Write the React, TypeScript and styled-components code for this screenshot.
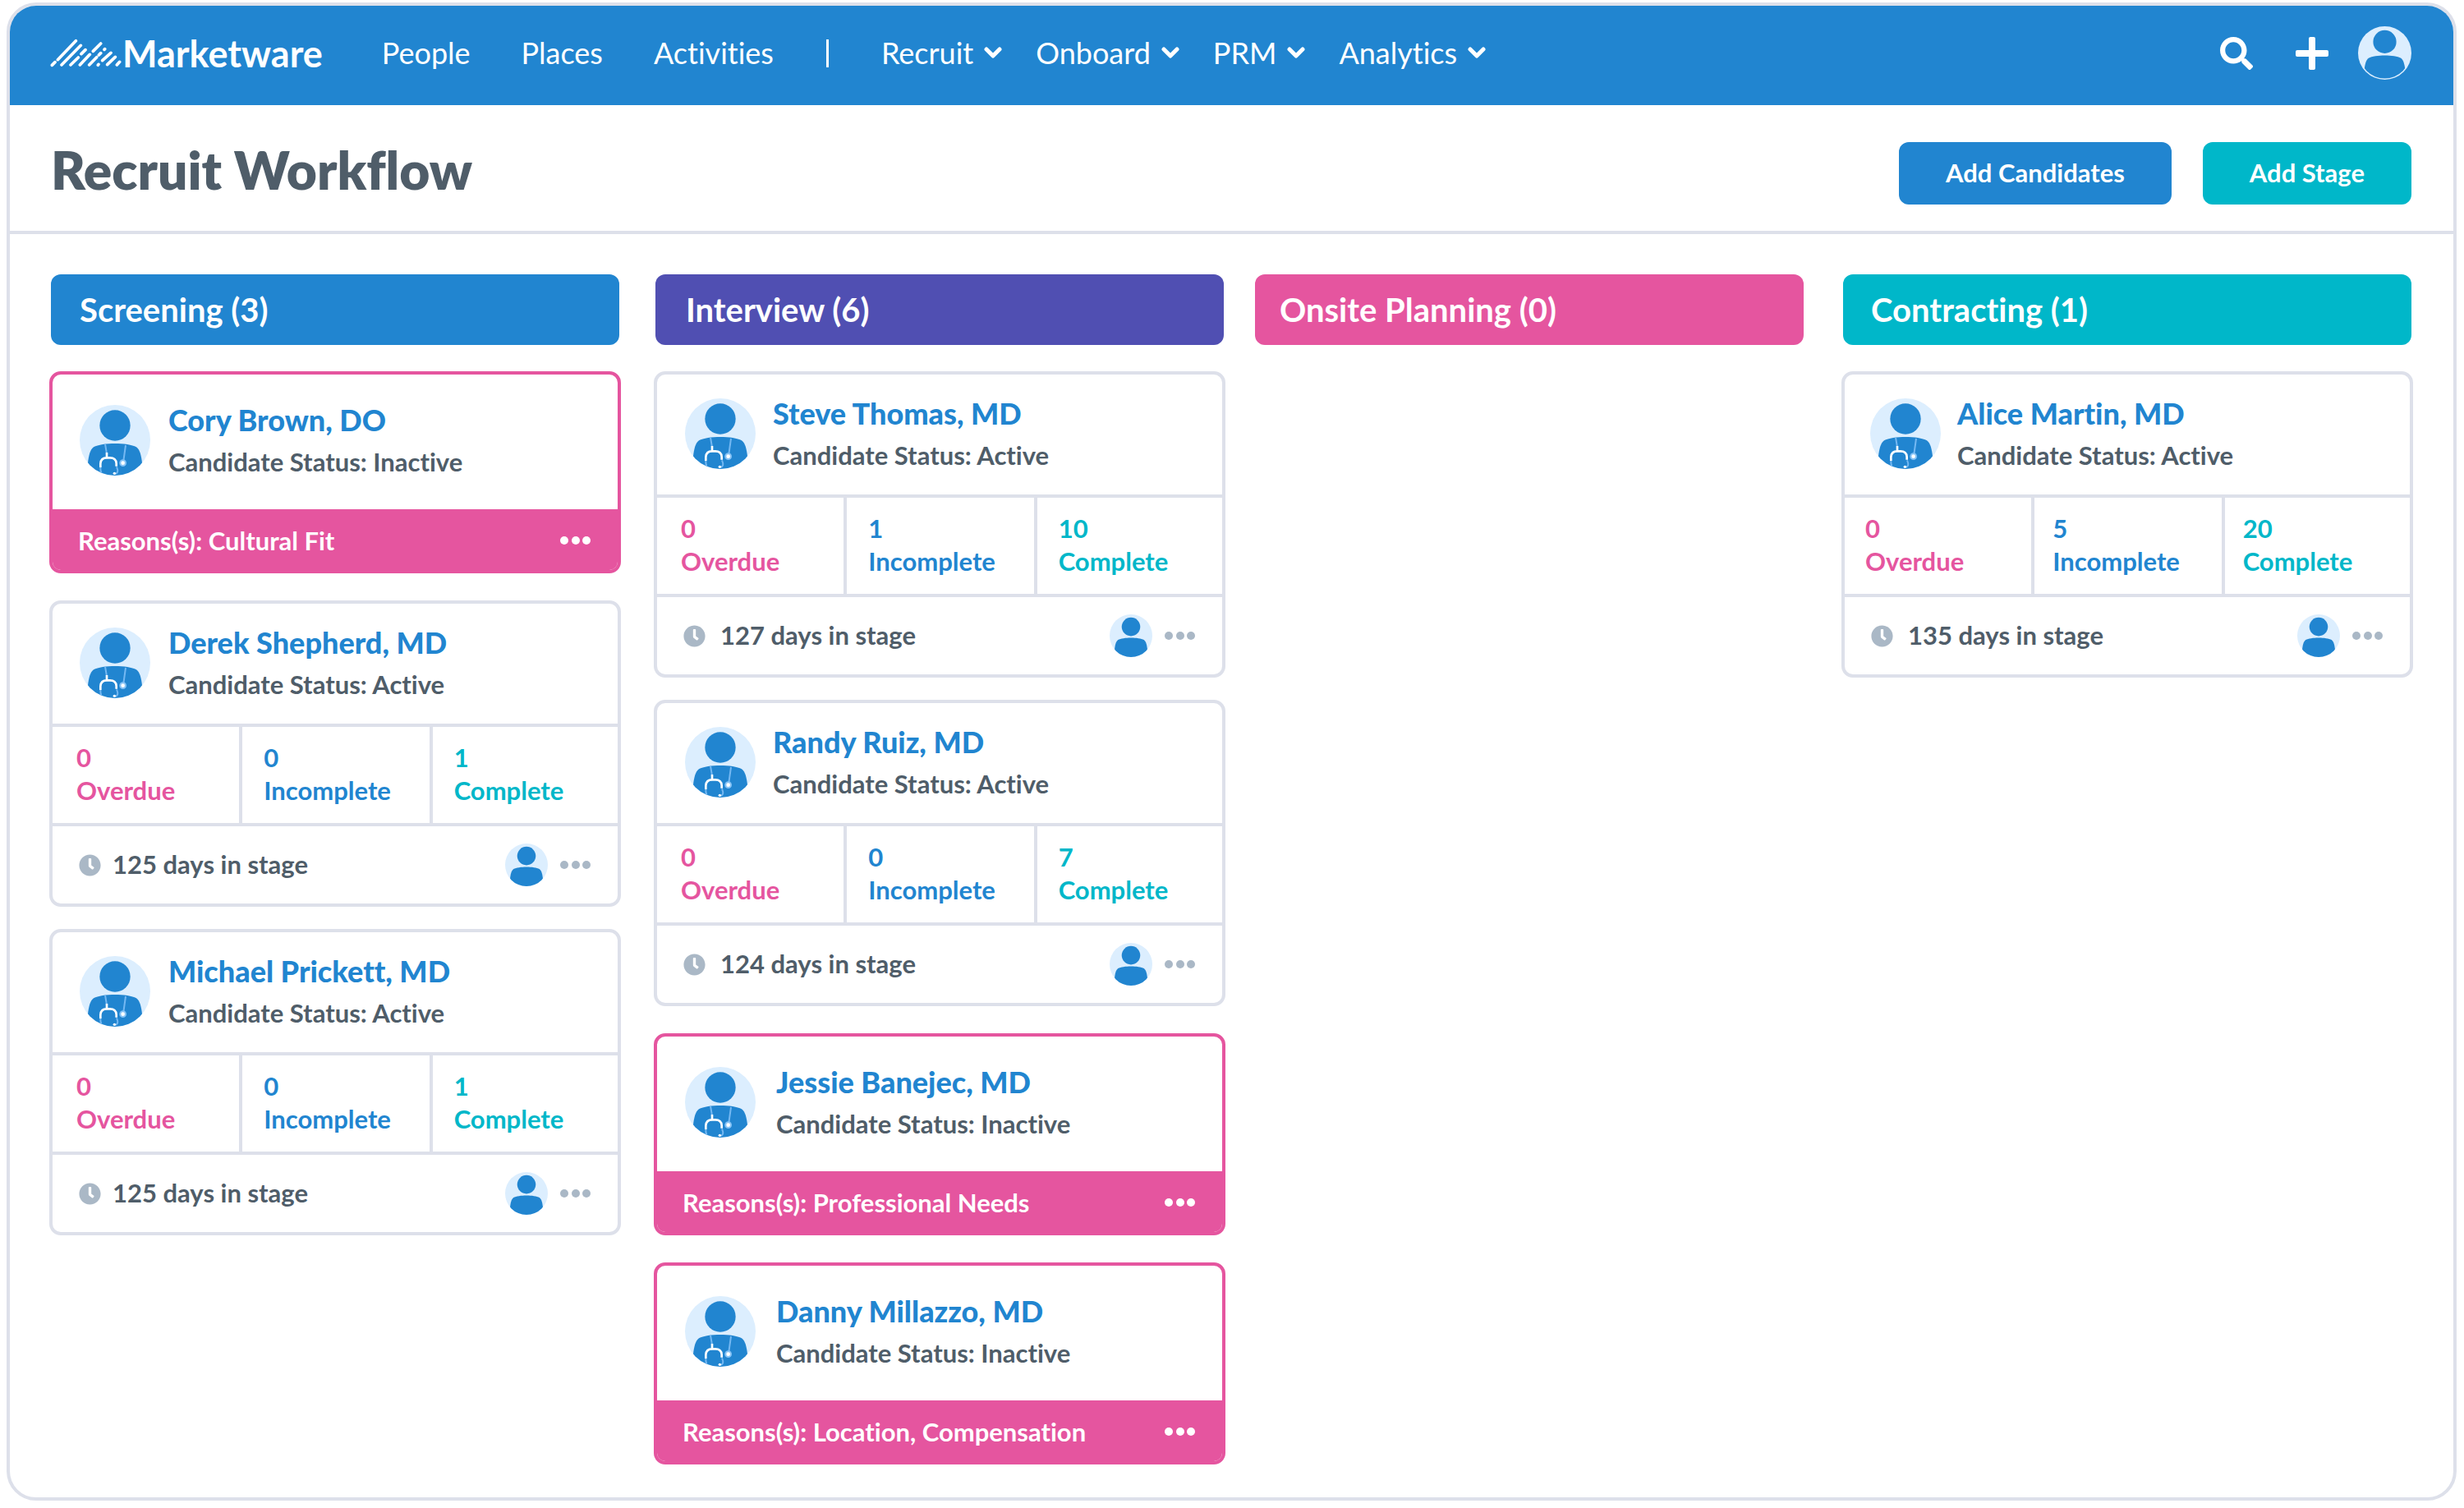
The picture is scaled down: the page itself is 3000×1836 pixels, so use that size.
import React from "react";
import styled, { createGlobalStyle } from "styled-components";
import { FaClock, FaSearch } from "react-icons/fa";

const color = {
  blue: "#2185d0",
  teal: "#00b7c9",
  pink: "#e5559f",
  purple: "#504fb2",
  slate: "#4f5d69",
  line: "#dde0ea",
  pale: "#dceefe",
  mute: "#aab8c6",
};

const GlobalStyle = createGlobalStyle`
  *, *::before, *::after { box-sizing: border-box; }
  body {
    margin: 0;
    background: #fff;
    color: ${color.slate};
    font-family: Lato, "Liberation Sans", sans-serif;
    font-variant-ligatures: none;
  }
  h1, h2, h3, p, dl, dt, dd { margin: 0; }
  button { font: inherit; color: inherit; border: 0; background: none; padding: 0; cursor: pointer; }
  a { color: inherit; text-decoration: none; }
  svg { display: block; flex: none; }
`;

const Page = styled.div`
  display: flex;
  min-height: 100vh;
  padding: 3px 9px 9px 8px;
`;

const Frame = styled.div`
  flex: 1;
  min-width: 0;
  border: 4px solid ${color.line};
  border-radius: 36px;
  overflow: hidden;
`;

const NavBar = styled.header`
  display: flex;
  align-items: center;
  justify-content: space-between;
  height: 121px;
  padding: 0 51px 6px 49px;
  background: ${color.blue};
  color: #fff;
`;

const NavGroup = styled.div<{ $gap?: number }>`
  display: flex;
  align-items: center;
  gap: ${(p) => p.$gap ?? 0}px;
`;

const Brand = styled.a`
  display: flex;
  align-items: center;
  margin-right: 72px;
  font-size: 45px;
  font-weight: 700;
  line-height: 52px;
`;

const NavLinks = styled.nav<{ $gap: number }>`
  display: flex;
  align-items: center;
  gap: ${(p) => p.$gap}px;
  padding-bottom: 2px;
  font-size: 36px;
  line-height: 44px;
`;

const NavDivider = styled.span`
  width: 3px;
  height: 34px;
  margin: 0 64px;
  background: #fff;
`;

const NavMenu = styled.button`
  display: flex;
  align-items: center;
  gap: 13px;
`;

const IconButton = styled.button`
  display: flex;
  align-items: center;
  justify-content: center;
`;

const TitleBar = styled.section`
  display: flex;
  align-items: flex-start;
  justify-content: space-between;
  padding: 45px 51px 32px 50px;
  border-bottom: 4px solid ${color.line};
`;

const Title = styled.h1`
  font-size: 64px;
  font-weight: 800;
  line-height: 68px;
`;

const TitleActions = styled.div`
  display: flex;
  gap: 38px;
`;

const ActionButton = styled.button<{ $color: string }>`
  height: 76px;
  padding: 0 57px 2px;
  border-radius: 12px;
  background: ${(p) => p.$color};
  color: #fff;
  font-size: 31px;
  font-weight: 700;
`;

const Board = styled.main`
  display: flex;
  align-items: flex-start;
  padding: 49px 49px 38px 48px;
`;

const StageColumn = styled.section<{ $share: number; $after: number }>`
  flex: ${(p) => p.$share} 1 0;
  min-width: 0;
  margin-right: ${(p) => p.$after}px;
`;

const StageTitle = styled.h2<{ $color: string; $inset: number }>`
  margin: 0 2px 32px;
  padding: 0 ${(p) => p.$inset}px;
  border-radius: 12px;
  background: ${(p) => p.$color};
  color: #fff;
  font-size: 40px;
  font-weight: 700;
  line-height: 86px;
`;

const Card = styled.article<{ $inactive: boolean; $above: number }>`
  margin-top: ${(p) => p.$above}px;
  border: 4px solid ${(p) => (p.$inactive ? color.pink : color.line)};
  border-radius: 14px;
  overflow: hidden;
`;

const CardHead = styled.div<{ $inactive: boolean; $inset: number; $gap: number }>`
  display: flex;
  align-items: center;
  gap: ${(p) => p.$gap}px;
  padding: ${(p) => (p.$inactive ? "33px" : "25px")} ${(p) => p.$inset}px
    ${(p) => (p.$inactive ? "38px" : "28px")};
`;

const Name = styled.h3`
  color: ${color.blue};
  font-size: 36px;
  font-weight: 900;
  line-height: 44px;
`;

const Status = styled.p`
  margin-top: 9px;
  font-size: 31px;
  font-weight: 700;
  line-height: 40px;
`;

const Stats = styled.dl`
  display: grid;
  grid-template-columns: 227fr 231fr 229fr;
  border-top: 4px solid ${color.line};
  border-bottom: 4px solid ${color.line};
  font-size: 31px;
  font-weight: 700;
  line-height: 40px;
`;

const Stat = styled.div<{ $color: string; $inset: number; $first: boolean }>`
  display: flex;
  flex-direction: column-reverse;
  padding: 17px 0 20px ${(p) => p.$inset}px;
  border-left: ${(p) => (p.$first ? 0 : 4)}px solid ${color.line};
  color: ${(p) => p.$color};
`;

const CardFoot = styled.div`
  display: flex;
  align-items: center;
  justify-content: space-between;
  height: 94px;
  padding: 0 33px 0 32px;
  font-size: 31px;
  font-weight: 700;
  line-height: 40px;
`;

const FootGroup = styled.div<{ $gap: number }>`
  display: flex;
  align-items: center;
  gap: ${(p) => p.$gap}px;
`;

const Days = styled.span`
  padding-bottom: 2px;
`;

const ReasonBar = styled.div`
  display: flex;
  align-items: center;
  justify-content: space-between;
  height: 74px;
  padding: 2px 33px 0 31px;
  background: ${color.pink};
  color: #fff;
  font-size: 31px;
  font-weight: 700;
`;

const BrandMark = () => (
  <svg width="88" height="36" viewBox="15 18 264 108" fill="none" stroke="#fff" strokeWidth="11" strokeLinecap="round" aria-hidden="true">
    <path d="M22 115 33 104M43 95 109 26M57 114 127 43M90 114 118 87M129 74 144 59M124 114 160 76M158 114 185 86M172 64 200 36M193 78 200 71M213 58 215 56M190 115 192 112M206 98 237 70M224 113 253 85M259 114 269 103" />
  </svg>
);

const ChevronIcon = () => (
  <svg width="22" height="14" viewBox="0 0 22 14" fill="none" stroke="#fff" strokeWidth="5" strokeLinecap="round" strokeLinejoin="round" aria-hidden="true">
    <path d="M3 3 11 11 19 3" />
  </svg>
);

const PlusIcon = () => (
  <svg width="40" height="40" viewBox="0 0 40 40" fill="#fff" aria-hidden="true">
    <rect x="16" y="0" width="8" height="40" rx="2" />
    <rect x="0" y="16" width="40" height="8" rx="2" />
  </svg>
);

const BODY =
  "M30 211C33 188 37 164 51 154C66 145 98 141 129 141C160 141 192 145 207 154C221 164 225 188 228 211L228 260L30 260Z";

type PersonProps = { size: number; doctor?: boolean; ring?: number };

function Person({ size, doctor = false, ring = 0 }: PersonProps) {
  const clip = React.useId();
  return (
    <svg width={size} height={size} viewBox="0 0 258 258" fill="none" aria-hidden="true">
      <clipPath id={clip}>
        <circle cx="129" cy="129" r={129 - ring} />
      </clipPath>
      <circle cx="129" cy="129" r="129" fill={color.pale} />
      <circle cx="129" cy="75" r="56" fill={color.blue} />
      <g clipPath={`url(#${clip})`}>
        <path d={BODY} fill={color.blue} />
        {doctor && (
          <>
            <path d="M93 143 99 178M168 147 160 204" stroke="#74b8f2" strokeWidth="6" />
            <path d="M76 226C75 236 77 244 80 252M135 226C141 240 141 250 128 252" stroke="#74b8f2" strokeWidth="6" />
            <path d="M99 174V193M76 228V214C77 199 86 193 99 193H111C124 193 134 200 134 214V224" stroke="#fff" strokeWidth="8" />
            <circle cx="127" cy="250" r="5" fill="#fff" />
            <circle cx="158" cy="212" r="13" fill="#86c3f6" />
            <circle cx="158" cy="212" r="7" fill="#fff" />
          </>
        )}
      </g>
    </svg>
  );
}

const Dots = ({ tint }: { tint: string }) => (
  <IconButton type="button" aria-label="More options">
    <svg width="37" height="10" viewBox="0 0 37 10" fill={tint} aria-hidden="true">
      <circle cx="5" cy="5" r="5" />
      <circle cx="19" cy="5" r="5" />
      <circle cx="32" cy="5" r="5" />
    </svg>
  </IconButton>
);

type Candidate = {
  name: string;
  reason?: string;
  counts?: [number, number, number];
  days?: number;
};

type Spacing = {
  title: number;
  head: number;
  text: number;
  inactiveText: number;
  stat: number;
  clock: number;
};

type Stage = {
  name: string;
  total: number;
  color: string;
  share: number;
  after: number;
  spacing: Spacing;
  candidates: Candidate[];
};

const stages: Stage[] = [
  {
    name: "Screening",
    total: 3,
    color: color.blue,
    share: 696,
    after: 40,
    spacing: { title: 35, head: 33, text: 22, inactiveText: 22, stat: 26, clock: 14 },
    candidates: [
      { name: "Cory Brown, DO", reason: "Cultural Fit" },
      { name: "Derek Shepherd, MD", counts: [0, 0, 1], days: 125 },
      { name: "Michael Prickett, MD", counts: [0, 0, 1], days: 125 },
    ],
  },
  {
    name: "Interview",
    total: 6,
    color: color.purple,
    share: 696,
    after: 34,
    spacing: { title: 37, head: 34, text: 21, inactiveText: 25, stat: 26, clock: 18 },
    candidates: [
      { name: "Steve Thomas, MD", counts: [0, 1, 10], days: 127 },
      { name: "Randy Ruiz, MD", counts: [0, 0, 7], days: 124 },
      { name: "Jessie Banejec, MD", reason: "Professional Needs" },
      { name: "Danny Millazzo, MD", reason: "Location, Compensation" },
    ],
  },
  {
    name: "Onsite Planning",
    total: 0,
    color: color.pink,
    share: 672,
    after: 44,
    spacing: { title: 30, head: 33, text: 22, inactiveText: 22, stat: 26, clock: 18 },
    candidates: [],
  },
  {
    name: "Contracting",
    total: 1,
    color: color.teal,
    share: 696,
    after: 0,
    spacing: { title: 34, head: 31, text: 20, inactiveText: 20, stat: 22, clock: 18 },
    candidates: [{ name: "Alice Martin, MD", counts: [0, 5, 20], days: 135 }],
  },
];

const statKinds = [
  { label: "Overdue", color: color.pink },
  { label: "Incomplete", color: color.blue },
  { label: "Complete", color: color.teal },
];

function spaceAbove(list: Candidate[], index: number) {
  if (index === 0) return 0;
  return list[index].reason || list[index - 1].reason ? 33 : 27;
}

type CardProps = { candidate: Candidate; spacing: Spacing; above: number };

function CandidateCard({ candidate, spacing, above }: CardProps) {
  const inactive = candidate.reason !== undefined;
  return (
    <Card $inactive={inactive} $above={above}>
      <CardHead
        $inactive={inactive}
        $inset={spacing.head}
        $gap={inactive ? spacing.inactiveText : spacing.text}
      >
        <Person size={86} doctor />
        <div>
          <Name>
            <a href="#candidate">{candidate.name}</a>
          </Name>
          <Status>Candidate Status: {inactive ? "Inactive" : "Active"}</Status>
        </div>
      </CardHead>
      {candidate.counts && (
        <Stats>
          {statKinds.map((kind, i) => (
            <Stat
              key={kind.label}
              $color={kind.color}
              $first={i === 0}
              $inset={i === 0 ? spacing.stat + 3 : spacing.stat}
            >
              <dt>{kind.label}</dt>
              <dd>{candidate.counts![i]}</dd>
            </Stat>
          ))}
        </Stats>
      )}
      {inactive ? (
        <ReasonBar>
          <span>Reasons(s): {candidate.reason}</span>
          <Dots tint="#fff" />
        </ReasonBar>
      ) : (
        <CardFoot>
          <FootGroup $gap={spacing.clock}>
            <FaClock size={27} color={color.mute} />
            <Days>{candidate.days} days in stage</Days>
          </FootGroup>
          <FootGroup $gap={15}>
            <Person size={52} />
            <Dots tint={color.mute} />
          </FootGroup>
        </CardFoot>
      )}
    </Card>
  );
}

export default function App() {
  return (
    <>
      <GlobalStyle />
      <Page>
        <Frame>
          <NavBar>
            <NavGroup>
              <Brand href="#home">
                <BrandMark />
                Marketware
              </Brand>
              <NavLinks $gap={62}>
                <a href="#people">People</a>
                <a href="#places">Places</a>
                <a href="#activities">Activities</a>
              </NavLinks>
              <NavDivider />
              <NavLinks $gap={41}>
                {["Recruit", "Onboard", "PRM", "Analytics"].map((label) => (
                  <NavMenu key={label} type="button">
                    {label}
                    <ChevronIcon />
                  </NavMenu>
                ))}
              </NavLinks>
            </NavGroup>
            <NavGroup $gap={36}>
              <NavGroup $gap={52}>
                <IconButton type="button" aria-label="Search">
                  <FaSearch size={40} />
                </IconButton>
                <IconButton type="button" aria-label="Add">
                  <PlusIcon />
                </IconButton>
              </NavGroup>
              <IconButton type="button" aria-label="Account">
                <Person size={65} ring={6} />
              </IconButton>
            </NavGroup>
          </NavBar>
          <TitleBar>
            <Title>Recruit Workflow</Title>
            <TitleActions>
              <ActionButton type="button" $color={color.blue}>Add Candidates</ActionButton>
              <ActionButton type="button" $color={color.teal}>Add Stage</ActionButton>
            </TitleActions>
          </TitleBar>
          <Board>
            {stages.map((stage) => (
              <StageColumn key={stage.name} $share={stage.share} $after={stage.after}>
                <StageTitle $color={stage.color} $inset={stage.spacing.title}>
                  {stage.name} ({stage.total})
                </StageTitle>
                {stage.candidates.map((candidate, i) => (
                  <CandidateCard
                    key={candidate.name}
                    candidate={candidate}
                    spacing={stage.spacing}
                    above={spaceAbove(stage.candidates, i)}
                  />
                ))}
              </StageColumn>
            ))}
          </Board>
        </Frame>
      </Page>
    </>
  );
}
